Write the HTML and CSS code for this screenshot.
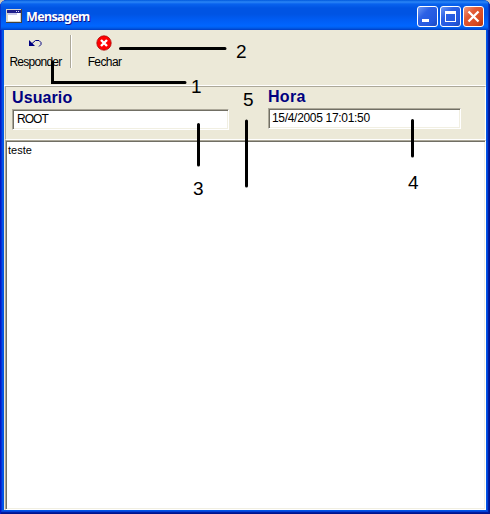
FILE: index.html
```html
<!DOCTYPE html>
<html lang="pt">
<head>
<meta charset="utf-8">
<title>Mensagem</title>
<link rel="stylesheet" href="styles.css">
</head>
<body>
<div class="window">
  <header class="titlebar">
    <svg class="app-icon" width="16" height="14" viewBox="0 0 16 14" shape-rendering="crispEdges">
      <path fill="#d8d5c8" d="M0 0h16v14H0z"/><path fill="#44423e" d="M15 0h1v14H0v-1h15z"/>
      <path fill="#fff" d="M2 4h12v8H2z"/><path fill="#20208c" d="M1 1h14v3H1z"/><path fill="#dcdcf0" d="M10 2h1v1h-1zM12 2h1v1h-1z"/>
      <path fill="#c9c8e8" d="M2 4h9v2H2z"/>
    </svg>
    <h1 class="title">Mensagem</h1>
    <div class="controls">
      <span class="control"><svg width="21" height="21" viewBox="0 0 21 21"><path fill="#fff" d="M5 13h7v3H5z"/></svg></span>
      <span class="control"><svg width="21" height="21" viewBox="0 0 21 21"><path fill="#fff" fill-rule="evenodd" d="M5 5h11v11H5zM6 8v7h9V8z"/></svg></span>
      <span class="control close"><svg width="21" height="21" viewBox="0 0 21 21"><path stroke="#fff" stroke-width="2.3" d="M5.5 5.5l10 10M15.500 5.500l-10 10"/></svg></span>
    </div>
  </header>
  <main class="client">
    <nav class="toolbar">
      <div class="tool reply">
        <svg width="16" height="16" viewBox="0 0 16 16" fill="none" stroke="#000080"><path fill="#000080" stroke="none" d="M1 5v6h6z"/><path d="M4 8.500L7.500 5.500h3.500l2 2v2l-2 2"/></svg>
        <span>Responder</span>
      </div>
      <i class="separator"></i>
      <div class="tool exit">
        <svg width="16" height="16" viewBox="0 0 16 16"><circle cx="8" cy="8" r="7.200" fill="#f00" stroke="#b00808" stroke-width=".8"/><path d="M5 5l6 6M11 5l-6 6" stroke="#fff" stroke-width="2.400"/></svg>
        <span>Fechar</span>
      </div>
    </nav>
    <section class="panel">
      <div class="field user"><b class="label label-user">Usuario</b><div class="input"><span class="root">ROOT</span></div></div>
      <div class="field time"><b class="label label-time">Hora</b><div class="input"><span class="date">15/4/2005 17:01:50</span></div></div>
    </section>
    <div class="memo"><span>teste</span></div>
  </main>
  <svg class="callouts" width="490" height="514" viewBox="0 0 490 514">
    <g fill="none" stroke="#000" stroke-width="3" stroke-linecap="round">
      <path d="M52.500 62V82.500H185M120.500 48.500H225M198.500 124.500V165M246.500 121V186M412.500 120.500V156"/>
    </g>
    <g class="numbers">
      <text x="191" y="93">1</text><text x="236" y="58">2</text><text x="193" y="195">3</text><text x="408" y="189">4</text><text x="243" y="106">5</text>
    </g>
  </svg>
</div>
</body>
</html>
```
FILE: styles.css
```css
* { box-sizing: border-box; }
body { margin: 0; background: #c9c6ba; font-family: "Liberation Sans", sans-serif; font-size: 12px; color: #000; }
.window {
  position: relative;
  width: 490px;
  height: 514px;
  padding: 0 4px 4px;
  display: flex;
  flex-direction: column;
  background: #0055e5;
  border-radius: 7px 7px 0 0;
  box-shadow: inset 1px 0 #001bc5, inset -1px -1px #00138c, inset -2px -2px #001ea0, inset 2px 0 #0831d9, inset -3px -3px #0441d8;
  overflow: hidden;
}
.titlebar {
  flex: 0 0 30px;
  margin: 0 -4px;
  padding: 2px 6px 0 6px;
  display: flex;
  align-items: center;
  background: linear-gradient(#0058dc 0, #2b86f6 2px, #0862ee 4px, #0054e3 8px, #0054e3 14px, #005df4 20px, #0066ff 26px, #005be8 28px, #003dc4 30px);
  box-shadow: inset 1px 0 #0637cc, inset -1px 0 #0026a8, inset -2px 0 #063bc7;
}
.title { margin: 1px 0 0 4px; flex: 1; font: bold 12.5px "Noto Sans", sans-serif; line-height: 18px; letter-spacing: -.65px; color: #fff; text-shadow: 1px 1px #0f1089; }
.controls { display: flex; gap: 2px; padding-top: 1px; }
.control { width: 21px; height: 21px; display: flex; align-items: center; justify-content: center; border: 1px solid #fff; border-radius: 3px; background: linear-gradient(135deg, #6d98f5, #2c61e5 35%, #2358df 75%, #1c49bd); }
.control svg { flex: none; }
.close { background: linear-gradient(135deg, #ef9b82, #e25a36 35%, #d8491e 75%, #b53410); }
.client { flex: 1; display: flex; flex-direction: column; background: #ece9d8; min-height: 0; }
.toolbar { height: 56px; flex: none; padding: 5px 0 0 1px; display: flex; border-bottom: 1px solid #fff; }
.tool { display: flex; flex-direction: column; align-items: center; gap: 4px; line-height: 14px; }
.tool span { white-space: nowrap; }
.reply { width: 61px; }
.reply span { letter-spacing: -.72px; }
.exit { width: 63px; }
.exit span { letter-spacing: -.6px; padding-left: 2px; }
.separator { width: 2px; height: 33px; margin: 0 0 0 4px; border-left: 1px solid #aca899; border-right: 1px solid #fff; }
.panel { flex: 0 0 54px; margin-left: 1px; border: 1px solid #aca899; border-right-color: #fff; border-bottom-color: #fff; display: flex; padding: 1px 0 0 6px; gap: 39px; }
.field { width: 217px; }
.time { width: 193px; }
.label { display: block; height: 20px; font-size: 16px; color: #000080; }
.label-user { letter-spacing: .1px; line-height: 20px; }
.label-time { letter-spacing: .3px; line-height: 18px; }
.input { height: 21px; padding: 0 3px; line-height: 17px; background: #fff; border: 1px solid; border-color: #aca899 #fff #fff #aca899; box-shadow: inset 1px 1px #716f64, inset -1px -1px #f1efe2; display: flex; align-items: center; }
.user .input { margin-top: 1px; }
.root { letter-spacing: -.95px; padding-left: 1px; }
.date { letter-spacing: -.31px; }
.memo { flex: 1; margin-left: 1px; background: #fff; border: 1px solid; border-color: #aca899 #fff #fff #aca899; box-shadow: inset 1px 1px #716f64, inset -1px -1px #f1efe2; padding: 3px 2px; line-height: 13px; font-size: 11px; }
.callouts { position: absolute; inset: 0; }
.numbers { font-size: 19px; }
```
